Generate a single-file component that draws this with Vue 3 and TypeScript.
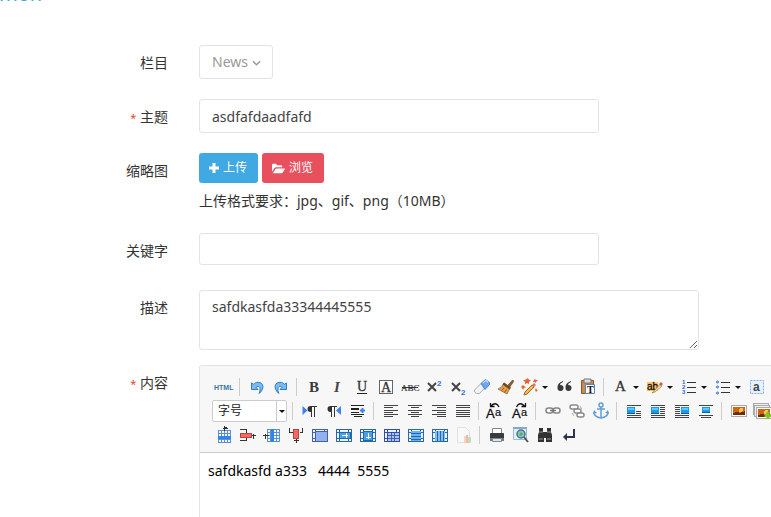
<script setup lang="ts">
import { ref } from 'vue'

interface Tool {
  name: string
  art?: string
  menu?: boolean
}

const sep: Tool = { name: '' }

const category = ref('News')
const subject = ref('asdfafdaadfafd')
const keywords = ref('')
const description = ref('safdkasfda33344445555')
const fontSize = ref('字号')
const body = 'safdkasfd a333   4444  5555'

const serif = 'font-family="Liberation Serif, serif"'
const sans = 'font-family="Liberation Sans, sans-serif"'

// Horizontal strokes, each given as [x, y, width]
const lines = (rows: number[][], color = '#444'): string =>
  rows.map(([x, y, w]) => `<rect x="${x}" y="${y}" width="${w}" height="1" fill="${color}"/>`).join('')

// Ruled grid with evenly spaced cells
const grid = (x: number, y: number, cols: number, rows: number, step: number, color: string): string => {
  let d = ''
  for (let c = 0; c <= cols; c++) d += `M${x + c * step + 0.5} ${y}v${rows * step + 1}`
  for (let r = 0; r <= rows; r++) d += `M${x} ${y + r * step + 0.5}h${cols * step + 1}`
  return `<path d="${d}" stroke="${color}" fill="none"/>`
}

const tableBase = (inner: string, edge = '#2b67a8'): string =>
  `<g shape-rendering="crispEdges"><rect x="4.500" y="6.500" width="15" height="12" fill="#eaf4ff" stroke="${edge}"/>` +
  `<path d="M4 9.500h16M4 15.500h16M7.500 6v13M16.500 6v13" stroke="${edge}" fill="none"/>${inner}</g>`

const undoPath =
  '<path d="M6.500 8v6.500h6.500l-2.200-2.300c3.200-1.800 5.700-.2 3.400 6.300 5.300-4.500 5-11-1.200-11.200-1.900 0-3.200.6-4.300 2z" fill="#7bbcf0" stroke="#2f7cc9"/>'
const refresh = (flip: boolean): string =>
  `<text x="3" y="19" ${sans} font-size="13" fill="#111" stroke="#111" stroke-width=".3">A</text>` +
  `<text x="12" y="17" ${sans} font-size="11" fill="#111" stroke="#111" stroke-width=".2">a</text>` +
  (flip
    ? '<path d="M7.500 8q3-6 8-1M16.500 4v3.500h-4" stroke="#111" stroke-width="1.300" fill="none"/>'
    : '<path d="M16 8q-3-6-8-1M7.500 4v3.500h4" stroke="#111" stroke-width="1.300" fill="none"/>')
const photo = (x: number, y: number): string =>
  `<rect x="${x}.5" y="${y}.5" width="15" height="11" fill="#fff" stroke="#aaa"/>` +
  `<path d="M${x + 2} ${y + 2}h12v8h-12z" fill="#d2650f"/>` +
  `<path d="M${x + 2} ${y + 8}l4-1 3 1 5-2v4h-12z" fill="#6b2c08"/>` +
  `<circle cx="${x + 10}" cy="${y + 5}" r="2" fill="#ffc455"/>`
const bluePic = (x: number, y: number, w = 8, h = 7): string =>
  `<rect x="${x}" y="${y}" width="${w}" height="${h}" fill="#189be8"/><path d="M${x} ${y + h - 1}h${w}v1h-${w}z" fill="#0b5fa8"/><path d="M${x + 1} ${y + 1}h${w - 2}v2h-${w - 2}z" fill="#65c8fb"/>`
const mark = '<path d="M14 7h-2.500a3 3 0 0 0 0 6H12v5h1V8h2v10h1V8h2V7z" fill="#333"/>'
const crisp = (s: string): string => `<g shape-rendering="crispEdges">${s}</g>`

const rowOne: Tool[] = [
  { name: 'HTML', art: `<text x="2" y="15" ${sans} font-size="7" font-weight="bold" fill="#3a75a5">HTML</text>` },
  sep,
  { name: '撤销', art: undoPath },
  { name: '重做', art: `<g transform="matrix(-1 0 0 1 24 0)">${undoPath}</g>` },
  sep,
  { name: '加粗', art: `<text x="7" y="17" ${serif} font-size="15" font-weight="bold" fill="#3a3a3a">B</text>` },
  { name: '斜体', art: `<text x="8" y="17" ${serif} font-size="15" font-weight="bold" font-style="italic" fill="#444">I</text>` },
  { name: '下划线', art: `<text x="7" y="16" ${serif} font-size="14" fill="#333" stroke="#333" stroke-width=".3">U</text>` + crisp('<path d="M7 18.500h10" stroke="#222"/>') },
  { name: '字符边框', art: crisp('<path d="M5.500 5.500h13v13h-13z" stroke="#666" fill="#fff"/>') + `<text x="7" y="17" ${serif} font-size="14" fill="#333" stroke="#333" stroke-width=".3">A</text>` },
  { name: '删除线', art: `<text x="3" y="16" ${serif} font-size="9" fill="#333" stroke="#333" stroke-width=".2">ABC</text>` + crisp('<path d="M4 12.500h16" stroke="#333"/>') },
  { name: '上标', art: '<path d="M6 8l8 8M14 8l-8 8" stroke="#444" stroke-width="2"/>' + `<text x="15" y="11" ${sans} font-size="8" font-weight="bold" fill="#2c6fe0">2</text>` },
  { name: '下标', art: '<path d="M6 8l8 8M14 8l-8 8" stroke="#444" stroke-width="2"/>' + `<text x="15" y="20" ${sans} font-size="8" font-weight="bold" fill="#2c6fe0">2</text>` },
  { name: '清除格式', art: '<path d="M4.500 15l7-7 4 4-6 6.500h-3l-2-1.500z" fill="#f1f3f6" stroke="#a7adb5"/><path d="M11 8.500l4.500-4 4 3v2l-4.500 5z" fill="#6fa5ea" stroke="#4b84cf"/><path d="M13 8l3-2.500 2 2" stroke="#b9d6fb" stroke-width="1.500" fill="none"/>' },
  { name: '格式刷', art: '<path d="M14 10l4.500-5 1.500 1-4 6z" fill="#8b5a30" stroke="#6b421c" stroke-width=".5"/><path d="M10 8l6 5-3 6-9-5q4-1 6-6z" fill="#e0a04f" stroke="#9a6424" stroke-width=".8"/><path d="M10 7.500l7 5-1.500 2-7-5z" fill="#6b4a2a"/><path d="M7.500 15.500l2.500-2.500M10.500 17.500l2-3" stroke="#8b5a20"/>' },
  { name: '自动排版', menu: true, art: '<path d="M7 17l7-7 2 2-7 7-3 1z" fill="#f4bd4b" stroke="#a56921"/><path d="M14 10l2-2 2 2-2 2z" fill="#e76b7b"/><path d="M10 3l1 2 2 0-2 2 0 2-2-1-2 1 0-2-2-2 2 0zM17 4l1 1 2 0-2 2 0 1-1-1-2 0 1-2zM5 10l1 1 2 1-2 1-1 2-1-2-1-1 1-1zM18 13l1 2 1 0-1 1-1 1-1-2z" fill="#ef6131"/>' },
  { name: '引用', art: '<path d="M11 7q-3 1-3 3h1a3 3 0 1 1-3.500 3Q5 8 11 6zM19 7q-3 1-3 3h1a3 3 0 1 1-3.500 3Q13 8 19 6z" fill="#3a3a3a"/>' },
  { name: '纯文本粘贴', art: '<path d="M5.500 5.500h12v13h-12z" fill="#c98a50" stroke="#8b552a"/><path d="M8 4h7v4H8z" fill="#ddd" stroke="#777"/><path d="M9.500 9.500h9v9h-9z" fill="#fff" stroke="#5d84ae"/>' + `<text x="11" y="18" ${serif} font-size="10" font-weight="bold" fill="#111">T</text>` },
  sep,
  { name: '字体颜色', menu: true, art: `<text x="6" y="16" ${serif} font-size="15" fill="#333" stroke="#333" stroke-width=".3">A</text>` },
  { name: '背景色', menu: true, art: '<path d="M4 7h11v9H4z" fill="#ffc56c"/>' + `<text x="4" y="15" ${sans} font-size="10" fill="#111" stroke="#111" stroke-width=".3">ab</text>` + '<path d="M10 17l7-8 2 2-7 6-3 1z" fill="#f3d48a" stroke="#a07838" stroke-width=".7"/><path d="M16 9l2-2 2 2-2 2z" fill="#e2574c"/>' },
  { name: '有序列表', menu: true, art: crisp('<path d="M10 7.500h9M10 12.500h9M10 17.500h9" stroke="#333"/>') + `<g ${sans} font-size="6" font-weight="bold" fill="#2c66dc"><text x="5" y="9">1</text><text x="5" y="14">2</text><text x="5" y="19">3</text></g>` },
  { name: '无序列表', menu: true, art: crisp('<path d="M10 7.500h9M10 12.500h9M10 17.500h9" stroke="#333"/>') + '<g fill="#d9e6ff" stroke="#2c66dc"><circle cx="6.500" cy="7" r="1"/><circle cx="6.500" cy="12" r="1"/><circle cx="6.500" cy="18" r="1"/></g>' },
  { name: '全选', art: '<rect x="5.500" y="5.500" width="13" height="13" fill="#e5f0ff" stroke="#86b0ea" stroke-dasharray="2 1"/>' + `<text x="8" y="16" ${sans} font-size="12" font-weight="bold" fill="#444">a</text>` },
]

const rowTwo: Tool[] = [
  sep,
  { name: '从左向右', art: '<path d="M4.500 7v9l5-4.500z" fill="#3f83f0"/><g transform="translate(1 0)">' + mark + '</g>' },
  { name: '从右向左', art: '<g transform="translate(-3 0)">' + mark + '</g><path d="M19 7v9l-5-4.500z" fill="#3f83f0"/>' },
  { name: '首行缩进', art: crisp(lines([[5, 6, 13], [5, 9, 8], [5, 10, 8], [5, 13, 8], [5, 15, 13], [8, 17, 8]], '#222')) + '<path d="M14 11.500h5M16.500 9v5" stroke="#3f83f0" stroke-width="2"/>' },
  sep,
  { name: '居左对齐', art: crisp(lines([[5, 6, 14], [5, 8, 9], [5, 11, 14], [5, 13, 9], [5, 15, 14], [5, 17, 9]])) },
  { name: '居中对齐', art: crisp(lines([[5, 6, 14], [8, 8, 8], [5, 11, 14], [8, 13, 8], [5, 15, 14], [8, 17, 8]])) },
  { name: '居右对齐', art: crisp(lines([[5, 6, 14], [10, 8, 9], [5, 11, 14], [10, 13, 9], [5, 15, 14], [10, 17, 9]])) },
  { name: '两端对齐', art: crisp(lines([[5, 6, 14], [5, 8, 14], [5, 11, 14], [5, 13, 14], [5, 15, 14], [5, 17, 14]])) },
  sep,
  { name: '字母大写', art: `<g transform="translate(-1 0)">${refresh(false)}</g>` },
  { name: '字母小写', art: `<g transform="translate(1 0)">${refresh(true)}</g>` },
  sep,
  { name: '超链接', art: '<g fill="#fff" stroke="#858585" stroke-width="1.500"><rect x="5" y="9" width="7" height="5" rx="2.500"/><rect x="12" y="9" width="7" height="5" rx="2.500"/></g><path d="M9 11.500h6" stroke="#777" stroke-width="1.500"/>' },
  { name: '取消链接', art: '<g fill="#fff" stroke="#8b8b8b" stroke-width="1.500"><rect x="5" y="6" width="8" height="4" rx="2"/><rect x="9" y="10" width="7" height="4" rx="2"/><rect x="12" y="14" width="7" height="4" rx="2"/></g><path d="M7 14l2 3M15 7l2 3" stroke="#aaa"/>' },
  { name: '锚点', art: '<g fill="none" stroke="#5e9fd8" stroke-width="1.500"><circle cx="12" cy="6" r="2"/><path d="M12 8v10M8 10h8M5 13q0 5 7 6 7-1 7-6"/></g><path d="M4 15l1-4 3 3zM20 15l-1-4-3 3z" fill="#5e9fd8"/>' },
  sep,
  { name: '默认', art: crisp(lines([[5, 6, 14], [14, 12, 5], [14, 14, 5], [5, 16, 14], [5, 18, 14]]) + bluePic(5, 8)) },
  { name: '左浮动', art: crisp(lines([[5, 6, 14], [14, 8, 5], [14, 10, 5], [14, 12, 5], [14, 14, 5], [5, 16, 14], [5, 18, 14]]) + bluePic(5, 8)) },
  { name: '右浮动', art: crisp(lines([[5, 6, 14], [5, 8, 5], [5, 10, 5], [5, 12, 5], [5, 14, 5], [5, 16, 14], [5, 18, 14]]) + bluePic(11, 8)) },
  { name: '居中', art: crisp(lines([[5, 6, 14], [5, 16, 14], [7, 18, 10]]) + bluePic(8, 8, 8, 6)) },
  sep,
  { name: '单图上传', art: crisp(photo(4, 6)) },
  { name: '多图上传', art: crisp('<path d="M2.500 4.500h15v11h-15z" fill="#eee" stroke="#aaa"/><path d="M3.500 6.500h15v11h-15z" fill="#eee" stroke="#aaa"/>' + photo(5, 8)) + '<path d="M17 13v7M13.500 16.500h7" stroke="#83c21b" stroke-width="3"/>' },
]

const blueGrid = '#5d8fd0'
const rowThree: Tool[] = [
  { name: '前插入行', art: crisp(grid(6, 7, 4, 4, 3, blueGrid) + '<path d="M6 13h13v3H6z" fill="#2d86ee"/><path d="M12.500 3v5M10.500 5.500h5M11.500 4.500h3" stroke="#333"/>') },
  { name: '删除行', art: crisp('<path d="M4 6.500h6.500v3M4 17.500h6.500v-3M15 12.500h5M17.500 10.500v5" stroke="#333" fill="none"/><path d="M4.500 10.500h11v4h-11z" fill="#f36b66" stroke="#c1403c"/>') },
  { name: '前插入列', art: crisp(grid(7, 6, 4, 4, 3, blueGrid) + '<path d="M11 6h3v13h-3z" fill="#2d86ee"/><path d="M3 12.500h6M5.500 10.500v5" stroke="#333"/>') },
  { name: '删除列', art: crisp('<path d="M5.500 5v4.500h3M18.500 5v4.500h-3M12.500 15v5M10 17.500h5" stroke="#333" fill="none"/><path d="M9.500 6.500h5v9h-5z" fill="#f36b66" stroke="#c1403c"/>') },
  { name: '合并单元格', art: tableBase('<path d="M7.500 8.500h12v10h-12z" fill="#91b1ef" stroke="#4360a9"/>', '#4360a9') },
  { name: '右合并单元格', art: tableBase('<path d="M7.500 9.500h11v6h-11z" fill="#4b9fe5" stroke="#2267a8"/><path d="M10 12.500h6M14.500 10v5" stroke="#fff"/>') },
  { name: '下合并单元格', art: tableBase('<path d="M7.500 8.500h9v9h-9z" fill="#4b9fe5" stroke="#2267a8"/><path d="M12.500 10v6M10 14.500h5" stroke="#fff"/>') },
  { name: '完全拆分', art: tableBase('<path d="M8 10h11v8H8z" fill="#a8c2f4"/><path d="M8 12.500h11M8 15.500h11M11.500 10v8M14.500 10v8" stroke="#4360a9"/>', '#364f9c') },
  { name: '拆分成行', art: tableBase('<path d="M7 8h10v10H7z" fill="#67b2ef"/><path d="M7 10.500h10M7 13.500h10M7 16.500h10" stroke="#2267a8"/>') },
  { name: '拆分成列', art: tableBase('<path d="M7 8h10v10H7z" fill="#82bdf0"/><path d="M9.500 8v10M12.500 8v10M15.500 8v10" stroke="#2267a8"/>') },
  { name: '图表', art: '<g opacity=".35"><path d="M5.500 4.500h8l4 4v11h-12z" fill="#fff" stroke="#bbb"/><path d="M12 13h2v7h-2z" fill="#e8a23a"/><path d="M14 12h2v8h-2z" fill="#d44"/><path d="M16 14h3v6h-3z" fill="#67b33b"/></g>' },
  sep,
  { name: '打印', art: '<path d="M7.500 5.500h9v6h-9z" fill="#fff" stroke="#888"/><rect x="5" y="10" width="14" height="6" rx="1" fill="#383b40"/><path d="M5 15h14v3H5z" fill="#777"/><path d="M7.500 15.500h9v3h-9z" fill="#d3e7fb" stroke="#888"/>' },
  { name: '预览', art: '<path d="M4.500 4.500h13v12h-13z" fill="#e3effa" stroke="#9cb9d5"/><path d="M4 4h14v2H4z" fill="#82a9d0"/><circle cx="12" cy="11" r="4" fill="#80c5d7" stroke="#57717c" stroke-width="1.500"/><path d="M10 12l2-3 2 2-2 2z" fill="#65ad3e"/><path d="M15 14l4 5" stroke="#555" stroke-width="2"/>' },
  { name: '查询替换', art: '<path d="M6 5h4v4h4V5h4v4l1 3v7h-6v-4h-2v4H5v-7l1-3z" fill="#333"/><path d="M6 9h4M14 9h4M6 16h4M14 16h4" stroke="#999"/>' },
  { name: '换行', art: '<path d="M17 6v8H9" stroke="#2f3150" stroke-width="2" fill="none"/><path d="M10 10v8l-4-4z" fill="#2f3150"/>' },
]

const toolRows: Tool[][] = [rowOne, rowTwo, rowThree]
</script>

<template>
  <main class="page">
    <h2 class="heading">mon</h2>

    <form class="form" @submit.prevent>
      <div class="row">
        <label class="label" for="category">栏目</label>
        <div class="field">
          <div class="category">
            <select id="category" v-model="category">
              <option>News</option>
            </select>
            <svg class="chevron" viewBox="0 0 10 6" aria-hidden="true"><path d="M1 1l4 4 4-4" /></svg>
          </div>
        </div>
      </div>

      <div class="row">
        <label class="label" for="subject"><span class="star">*</span> 主题</label>
        <div class="field"><input id="subject" v-model="subject" class="text tall" type="text" /></div>
      </div>

      <div class="row">
        <span id="thumb" class="label">缩略图</span>
        <div class="field" role="group" aria-labelledby="thumb">
          <div class="actions">
            <button type="button" class="action upload">
              <svg class="plus" viewBox="0 0 10 10" aria-hidden="true"><path d="M5 0v10M0 5h10" /></svg>
              <span>上传</span>
            </button>
            <button type="button" class="action browse">
              <svg class="folder" viewBox="0 0 14 11" aria-hidden="true">
                <path d="M0 9V1.500Q0 .5 1 .5h3q1 0 1 1V2h5q1 0 1 1v1.200H4.500Q3.200 4.200 2.500 5.200z" />
                <path d="M1 10.500l2.500-4.200Q4 5.400 5 5.400h8.500q.8 0 .3.800l-2.300 3.500q-.5.800-1.500.8z" />
              </svg>
              <span>浏览</span>
            </button>
          </div>
          <p class="hint">上传格式要求：jpg、gif、png（10MB）</p>
        </div>
      </div>

      <div class="row roomy">
        <label class="label" for="keywords">关键字</label>
        <div class="field"><input id="keywords" v-model="keywords" class="text" type="text" /></div>
      </div>

      <div class="row snug">
        <label class="label" for="description">描述</label>
        <div class="field"><textarea id="description" v-model="description" class="area"></textarea></div>
      </div>

      <div class="row last">
        <span id="content" class="label"><span class="star">*</span> 内容</span>
        <div class="field editor">
          <div class="toolbar" role="toolbar" aria-labelledby="content">
            <div v-for="(tools, r) in toolRows" :key="r" class="tools">
              <div v-if="r === 1" class="size">
                <select v-model="fontSize" aria-label="字号">
                  <option>字号</option>
                </select>
                <span class="drop" aria-hidden="true"><i class="caret"></i></span>
              </div>
              <template v-for="(tool, i) in tools" :key="i">
                <button v-if="tool.art" type="button" class="tool" :aria-label="tool.name">
                  <svg class="icon" viewBox="0 0 24 24" aria-hidden="true" v-html="tool.art"></svg>
                  <span v-if="tool.menu" class="more"><i class="caret"></i></span>
                </button>
                <span v-else class="sep"></span>
              </template>
            </div>
          </div>
          <div class="content" contenteditable="true" role="textbox" aria-labelledby="content">{{ body }}</div>
        </div>
      </div>
    </form>
  </main>
</template>

<style>
body {
  margin: 0;
  background: #fff;
}
</style>

<style scoped>
* {
  box-sizing: border-box;
}
.page {
  min-height: 100vh;
  overflow: hidden;
  display: flex;
  flex-direction: column;
  color: #333;
  font: 14px/20px "Noto Sans", "Noto Sans CJK SC", sans-serif;
}
.heading {
  height: 24px;
  margin: -18px 0 39px -1px;
  font-size: 20px;
  line-height: 24px;
  font-weight: 400;
  color: #3fa9e1;
}
.form {
  flex: 1;
  display: flex;
  flex-direction: column;
}
.row {
  display: grid;
  grid-template-columns: 168px minmax(0, 1fr);
  column-gap: 31px;
  margin-bottom: 20px;
}
.roomy {
  margin-bottom: 25px;
}
.snug {
  margin-bottom: 15px;
}
.last {
  flex: 1;
  margin-bottom: 0;
}
.label {
  padding-top: 8px;
  text-align: right;
}
.star {
  color: #e04a2f;
  font-size: 11px;
}
.field {
  min-width: 0;
}
select,
input,
textarea,
button {
  font: inherit;
  margin: 0;
}
.category {
  position: relative;
  width: 74px;
}
.category select {
  display: block;
  width: 100%;
  height: 34px;
  padding: 0 20px 0 12px;
  appearance: none;
  border: 1px solid #e2e2ef;
  border-radius: 3px;
  background: #fff;
  color: #999;
}
.chevron {
  position: absolute;
  right: 12px;
  top: 15px;
  width: 9px;
  height: 6px;
  fill: none;
  stroke: #999;
  stroke-width: 1.5;
  pointer-events: none;
}
.text {
  display: block;
  width: 100%;
  max-width: 400px;
  height: 32px;
  padding: 0 12px;
  border: 1px solid #e2e2ef;
  border-radius: 3px;
  background: #fff;
  color: #444;
}
.tall {
  height: 34px;
}
.actions {
  display: flex;
  gap: 4px;
}
.action {
  display: flex;
  align-items: center;
  gap: 4px;
  height: 30px;
  padding: 0 11px 0 10px;
  border: 0;
  border-radius: 3px;
  color: #fff;
  font-size: 12px;
}
.upload {
  background: #40a8e2;
}
.browse {
  background: #e9505d;
}
.plus {
  width: 10px;
  height: 10px;
  stroke: #fff;
  stroke-width: 3;
}
.folder {
  width: 13px;
  height: 11px;
  fill: #fff;
}
.hint {
  margin: 0;
  padding: 8px 0 2px;
}
.area {
  display: block;
  width: 100%;
  max-width: 500px;
  height: 60px;
  padding: 6px 12px;
  border: 1px solid #e2e2ef;
  border-radius: 3px;
  background: #fff;
  color: #444;
  resize: vertical;
}
.editor {
  display: flex;
  flex-direction: column;
  border: 1px solid #e2e2ef;
  border-width: 1px 0 0 1px;
  border-radius: 3px 0 0 0;
  overflow: hidden;
}
.toolbar {
  padding: 9px 0 5px 12px;
  background: #f7f7f7;
  border-bottom: 1px solid #ccc;
}
.tools {
  display: flex;
  height: 24px;
}
.tool {
  display: flex;
  flex: none;
  padding: 0;
  border: 0;
  background: none;
}
.icon {
  flex: none;
  width: 24px;
  height: 24px;
}
.more {
  display: flex;
  align-items: center;
  width: 10px;
  height: 24px;
}
.caret {
  border: 3px solid transparent;
  border-top-color: #111;
  border-bottom: 0;
}
.sep {
  flex: none;
  width: 9px;
  height: 18px;
  margin-top: 3px;
  background: linear-gradient(#ccc, #ccc) 3px 0 / 1px 100% no-repeat;
}
.size {
  display: flex;
  flex: none;
  width: 75px;
  height: 22px;
  margin: 1px 2px 0 0;
  border: 1px solid #ccc;
  border-radius: 2px;
  background: #fff;
}
.size select {
  flex: 1;
  min-width: 0;
  padding: 0 5px;
  appearance: none;
  border: 0;
  background: none;
  color: #222;
  font-size: 12px;
}
.drop {
  display: flex;
  align-items: center;
  justify-content: center;
  width: 10px;
  border-left: 1px solid #ccc;
}
.content {
  flex: 1;
  padding: 8px;
  background: #fff;
  color: #000;
  white-space: pre-wrap;
  outline: none;
}
</style>
